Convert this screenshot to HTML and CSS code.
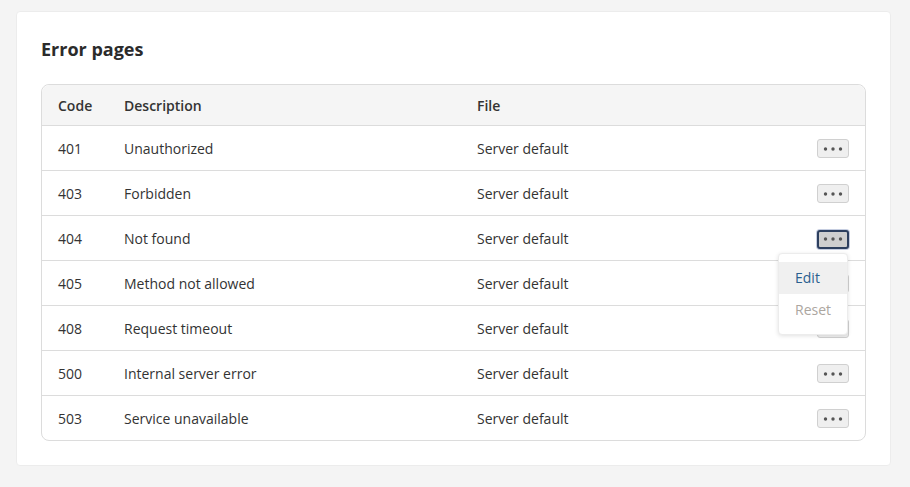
FILE: index.html
```html
<!DOCTYPE html>
<html lang="en">
<head>
    <meta charset="UTF-8">
    <title>Error pages</title>
    <link rel="stylesheet" href="styles.css">
</head>
<body>
    <div class="card">
        <h2 class="title">Error pages</h2>

        <div class="table-wrap">
            <table class="errors">
                <colgroup>
                    <col class="col-code">
                    <col class="col-desc">
                    <col class="col-file">
                    <col class="col-act">
                </colgroup>
                <thead>
                    <tr>
                        <th>Code</th>
                        <th>Description</th>
                        <th>File</th>
                        <th></th>
                    </tr>
                </thead>
                <tbody>
                    <tr>
                        <td>401</td><td>Unauthorized</td><td>Server default</td>
                        <td class="act"><button class="more"><svg width="20" height="4" viewBox="0 0 20 4"><circle cx="2.5" cy="2" r="1.7"/><circle cx="10" cy="2" r="1.7"/><circle cx="17.5" cy="2" r="1.7"/></svg></button></td>
                    </tr>
                    <tr>
                        <td>403</td><td>Forbidden</td><td>Server default</td>
                        <td class="act"><button class="more"><svg width="20" height="4" viewBox="0 0 20 4"><circle cx="2.5" cy="2" r="1.7"/><circle cx="10" cy="2" r="1.7"/><circle cx="17.5" cy="2" r="1.7"/></svg></button></td>
                    </tr>
                    <tr>
                        <td>404</td><td>Not found</td><td>Server default</td>
                        <td class="act">
                            <div class="menu-anchor">
                                <button class="more active"><svg width="20" height="4" viewBox="0 0 20 4"><circle cx="2.5" cy="2" r="1.7"/><circle cx="10" cy="2" r="1.7"/><circle cx="17.5" cy="2" r="1.7"/></svg></button>
                                <ul class="dropdown">
                                    <li class="hover">Edit</li>
                                    <li class="disabled">Reset</li>
                                </ul>
                            </div>
                        </td>
                    </tr>
                    <tr>
                        <td>405</td><td>Method not allowed</td><td>Server default</td>
                        <td class="act"><button class="more"><svg width="20" height="4" viewBox="0 0 20 4"><circle cx="2.5" cy="2" r="1.7"/><circle cx="10" cy="2" r="1.7"/><circle cx="17.5" cy="2" r="1.7"/></svg></button></td>
                    </tr>
                    <tr>
                        <td>408</td><td>Request timeout</td><td>Server default</td>
                        <td class="act"><button class="more"><svg width="20" height="4" viewBox="0 0 20 4"><circle cx="2.5" cy="2" r="1.7"/><circle cx="10" cy="2" r="1.7"/><circle cx="17.5" cy="2" r="1.7"/></svg></button></td>
                    </tr>
                    <tr>
                        <td>500</td><td>Internal server error</td><td>Server default</td>
                        <td class="act"><button class="more"><svg width="20" height="4" viewBox="0 0 20 4"><circle cx="2.5" cy="2" r="1.7"/><circle cx="10" cy="2" r="1.7"/><circle cx="17.5" cy="2" r="1.7"/></svg></button></td>
                    </tr>
                    <tr>
                        <td>503</td><td>Service unavailable</td><td>Server default</td>
                        <td class="act"><button class="more"><svg width="20" height="4" viewBox="0 0 20 4"><circle cx="2.5" cy="2" r="1.7"/><circle cx="10" cy="2" r="1.7"/><circle cx="17.5" cy="2" r="1.7"/></svg></button></td>
                    </tr>
                </tbody>
            </table>
        </div>
    </div>
</body>
</html>
```

FILE: styles.css
```css
* {
    box-sizing: border-box;
}

body {
    margin: 0;
    padding: 11px 19px 0 16px;
    background: #f4f4f4;
    font-family: "Open Sans", "Noto Sans", Arial, sans-serif;
    font-size: 14px;
    color: #333;
}

.card {
    background: #fff;
    border: 1px solid #ececec;
    border-radius: 4px;
    padding: 24px 24px 24px 24px;
}

.title {
    margin: 0 0 21px 0;
    font-size: 18px;
    font-weight: 700;
    line-height: 27px;
    color: #2b2b2b;
}

.table-wrap {
    border: 1px solid #dcdcdc;
    border-radius: 8px;
}

.errors {
    width: 100%;
    border-collapse: separate;
    border-spacing: 0;
    table-layout: fixed;
}

.col-code { width: 66px; }
.col-desc { width: 353px; }
.col-act { width: 80px; }

.errors th {
    background: #f5f5f5;
    text-align: left;
    font-weight: 600;
    height: 41px;
    padding: 0 16px;
    border-bottom: 1px solid #dcdcdc;
}

.errors th:first-child { border-top-left-radius: 8px; }
.errors th:last-child { border-top-right-radius: 8px; }

.errors td {
    height: 45px;
    padding: 0 16px;
    border-bottom: 1px solid #dcdcdc;
}

.errors tbody tr:last-child td {
    border-bottom: none;
    height: 44px;
}

.act {
    text-align: right;
}

.more {
    width: 32px;
    height: 19px;
    padding: 0;
    margin: 0;
    border: 1px solid #d0d0d0;
    border-radius: 3px;
    background: #efefef;
    display: inline-flex;
    align-items: center;
    justify-content: center;
    vertical-align: middle;
    cursor: pointer;
}

.more svg {
    fill: #555;
}

.more.active {
    background: #cfcfcf;
    border: 2px solid #2d3f5e;
    box-shadow: 0 0 0 1px #c5cde0;
}

.menu-anchor {
    position: relative;
    display: inline-block;
    vertical-align: middle;
}

.dropdown {
    position: absolute;
    top: 25px;
    right: 1px;
    width: 70px;
    margin: 0;
    padding: 8px 0;
    list-style: none;
    background: #fff;
    border: 1px solid #ececec;
    border-radius: 4px;
    box-shadow: 0 1px 4px rgba(0,0,0,0.12);
    text-align: left;
    z-index: 5;
}

.dropdown li {
    height: 32px;
    line-height: 32px;
    padding-left: 16px;
}

.dropdown li.hover {
    background: #f0f0f0;
    color: #2a5f8f;
}

.dropdown li.disabled {
    color: #aca6a0;
}
```
